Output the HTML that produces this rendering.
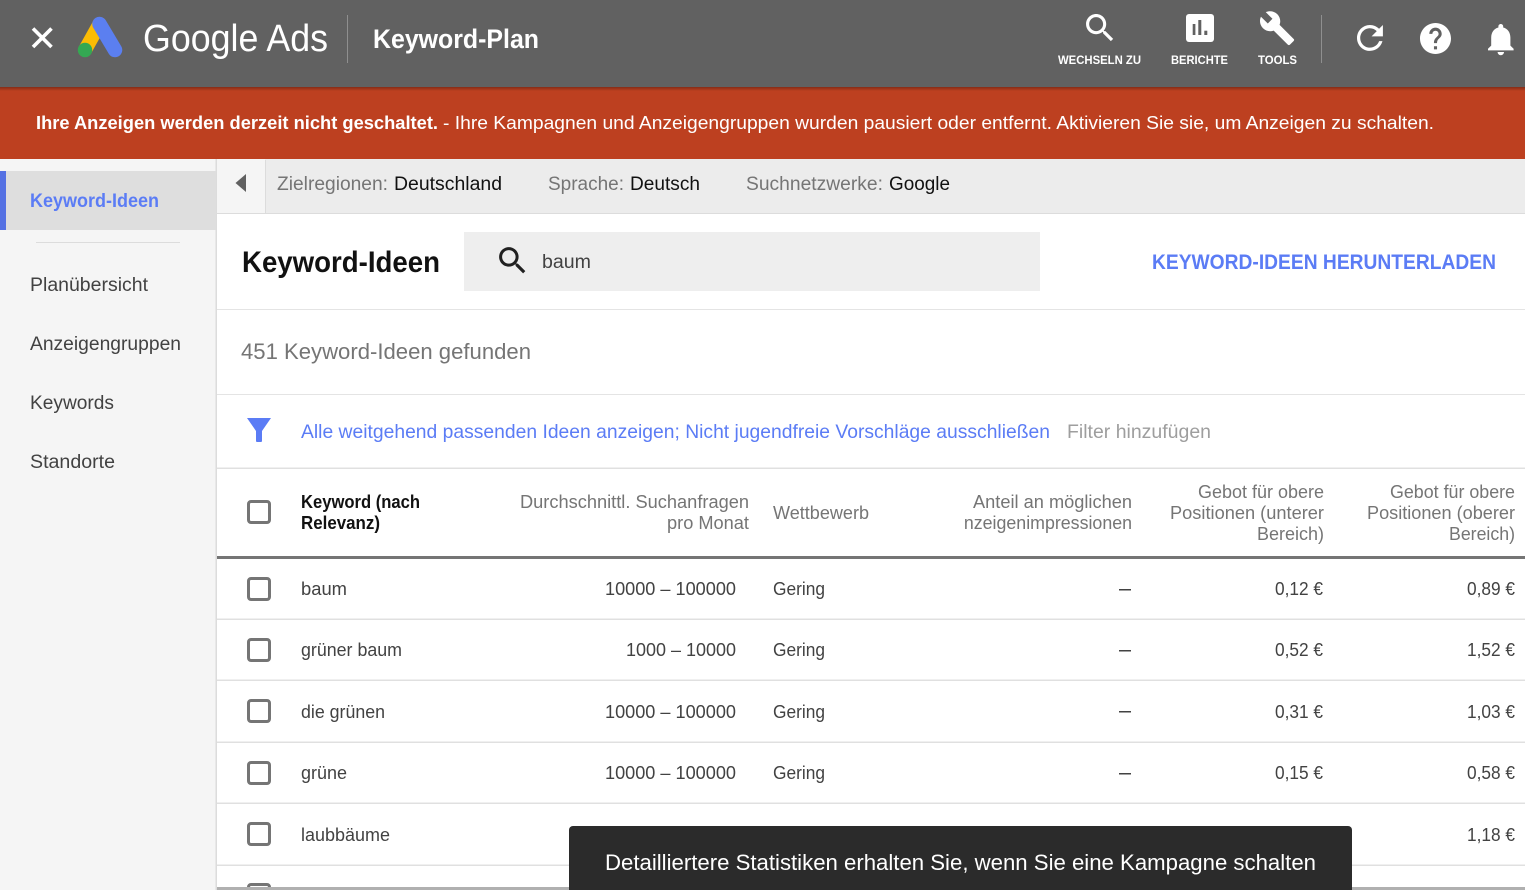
<!DOCTYPE html>
<html lang="de">
<head>
<meta charset="utf-8">
<title>Keyword-Plan</title>
<style>
html,body{margin:0;padding:0;width:1525px;height:890px;overflow:hidden;background:#fff}
svg{display:block}
text{font-family:"Liberation Sans",Arial,sans-serif;white-space:pre}
.b{font-weight:bold}
.nav{font-size:19px;fill:#424242}
.top{font-size:19px}
.hd{font-size:18px;fill:#757575}
.kw{font-size:18px;fill:#424242}
.cb{fill:none;stroke:#757575;stroke-width:3}
</style>
</head>
<body>
<svg width="1525" height="890" viewBox="0 0 1525 890" xmlns="http://www.w3.org/2000/svg">
<defs>
<linearGradient id="sh" x1="0" y1="0" x2="0" y2="1"><stop offset="0" stop-color="#000" stop-opacity=".3"/><stop offset="1" stop-color="#000" stop-opacity="0"/></linearGradient>
<clipPath id="cl"><rect x="964" y="480" width="200" height="70"/></clipPath>
</defs>
<rect width="1525" height="890" fill="#fff"/>

<!-- sidebar -->
<rect x="0" y="159" width="216" height="731" fill="#f5f5f5"/>
<rect x="215.500" y="159" width="1.500" height="731" fill="#dcdcdc"/>
<rect x="0" y="171" width="216" height="59" fill="#dedede"/>
<rect x="0" y="171" width="6" height="59" fill="#5571e3"/>
<text x="30" y="207" class="nav b" style="fill:#5b7cf5" textLength="129" lengthAdjust="spacingAndGlyphs">Keyword-Ideen</text>
<rect x="36" y="242" width="144" height="1" fill="#dcdcdc"/>
<text x="30" y="291" class="nav" textLength="118" lengthAdjust="spacingAndGlyphs">Planübersicht</text>
<text x="30" y="350" class="nav" textLength="151" lengthAdjust="spacingAndGlyphs">Anzeigengruppen</text>
<text x="30" y="409" class="nav" textLength="84" lengthAdjust="spacingAndGlyphs">Keywords</text>
<text x="30" y="468" class="nav" textLength="85" lengthAdjust="spacingAndGlyphs">Standorte</text>

<!-- header -->
<rect width="1525" height="87" fill="#616161"/>
<path d="M33 28.500L51.500 47M51.500 28.500L33 47" stroke="#fff" stroke-width="3.600" fill="none"/>
<path d="M99.500 24L85 50" stroke="#fbbc04" stroke-width="14" stroke-linecap="round" fill="none"/>
<path d="M99.500 24L115 50" stroke="#5b7ff0" stroke-width="14.500" stroke-linecap="round" fill="none"/>
<circle cx="85" cy="50" r="7.200" fill="#34a853"/>
<text x="143" y="51" font-size="38" fill="#fff" textLength="185" lengthAdjust="spacingAndGlyphs">Google Ads</text>
<rect x="347" y="15" width="1" height="48" fill="#8f8f8f"/>
<text x="373" y="48" font-size="27" class="b" fill="#fff" textLength="166" lengthAdjust="spacingAndGlyphs">Keyword-Plan</text>

<path transform="translate(1081.4 9.400) scale(1.550)" fill="#fff" d="M15.500 14h-.79l-.28-.27C15.410 12.590 16 11.110 16 9.500 16 5.910 13.090 3 9.500 3S3 5.910 3 9.500 5.910 16 9.500 16c1.610 0 3.090-.59 4.230-1.570l.27.28v.79l5 4.990L20.490 19l-4.990-5zm-6 0C7.010 14 5 11.990 5 9.500S7.010 5 9.500 5 14 7.010 14 9.500 11.990 14 9.500 14z"/>
<rect x="1186" y="14" width="28" height="28" rx="3" fill="#fff"/>
<rect x="1192.700" y="24" width="2.700" height="11" fill="#616161"/>
<rect x="1198.300" y="20" width="3" height="15" fill="#616161"/>
<rect x="1204.300" y="30.700" width="3" height="4.300" fill="#616161"/>
<path transform="translate(1258.500 9.500) scale(1.550)" fill="#fff" d="M22.700 19l-9.100-9.100c.9-2.300.4-5-1.500-6.900-2-2-5-2.400-7.400-1.300L9 6 6 9 1.600 4.700C.4 7.100.9 10.100 2.900 12.100c1.900 1.900 4.600 2.400 6.900 1.500l9.100 9.100c.4.4 1 .4 1.400 0l2.300-2.300c.5-.4.5-1.100.1-1.400z"/>
<text x="1058" y="64" font-size="12" class="b" fill="#fff" textLength="83" lengthAdjust="spacingAndGlyphs">WECHSELN ZU</text>
<text x="1171" y="64" font-size="12" class="b" fill="#fff" textLength="57" lengthAdjust="spacingAndGlyphs">BERICHTE</text>
<text x="1258" y="64" font-size="12" class="b" fill="#fff" textLength="39" lengthAdjust="spacingAndGlyphs">TOOLS</text>
<rect x="1321" y="15" width="1" height="48" fill="#8f8f8f"/>
<path transform="translate(1350.500 18.500) scale(1.620)" fill="#fff" d="M17.650 6.350C16.200 4.900 14.210 4 12 4c-4.420 0-7.990 3.580-7.990 8s3.570 8 7.990 8c3.730 0 6.840-2.550 7.730-6h-2.080c-.82 2.330-3.040 4-5.650 4-3.310 0-6-2.690-6-6s2.690-6 6-6c1.660 0 3.140.69 4.220 1.780L13 11h7V4l-2.350 2.350z"/>
<path transform="translate(1416.900 19.900) scale(1.550)" fill="#fff" d="M12 2C6.480 2 2 6.480 2 12s4.480 10 10 10 10-4.480 10-10S17.520 2 12 2zm1 17h-2v-2h2v2zm2.070-7.750l-.9.92C13.450 12.900 13 13.500 13 15h-2v-.5c0-1.100.45-2.100 1.170-2.830l1.240-1.260c.37-.36.59-.86.59-1.410 0-1.100-.9-2-2-2s-2 .9-2 2H8c0-2.210 1.790-4 4-4s4 1.790 4 4c0 .88-.36 1.680-.93 2.250z"/>
<path transform="translate(1481.600 20) scale(1.600)" fill="#fff" d="M12 22c1.100 0 2-.9 2-2h-4c0 1.100.89 2 2 2zm6-6v-5c0-3.070-1.640-5.640-4.500-6.320V4c0-.83-.67-1.500-1.500-1.500s-1.500.67-1.500 1.500v.68C7.630 5.360 6 7.920 6 11v5l-2 2v1h16v-1l-2-2z"/>

<!-- banner -->
<rect x="0" y="87" width="1525" height="72" fill="#bd4020"/>
<rect x="0" y="87" width="1525" height="4" fill="url(#sh)"/>
<text x="36" y="129" font-size="18" class="b" fill="#fff" textLength="402" lengthAdjust="spacingAndGlyphs">Ihre Anzeigen werden derzeit nicht geschaltet.</text>
<text x="443" y="129" font-size="18" fill="#fff" textLength="991" lengthAdjust="spacingAndGlyphs">- Ihre Kampagnen und Anzeigengruppen wurden pausiert oder entfernt. Aktivieren Sie sie, um Anzeigen zu schalten.</text>

<!-- location bar -->
<rect x="217" y="159" width="1308" height="54" fill="#ececec"/>
<rect x="217" y="159" width="48" height="54" fill="#f5f5f5"/>
<rect x="265" y="160" width="1" height="53" fill="#dcdcdc"/>
<rect x="217" y="213" width="1308" height="1" fill="#dcdcdc"/>
<path d="M246 174V192L235.500 183z" fill="#616161"/>
<text x="277" y="190" class="top" fill="#757575" textLength="111" lengthAdjust="spacingAndGlyphs">Zielregionen:</text>
<text x="394" y="190" class="top" fill="#111" textLength="108" lengthAdjust="spacingAndGlyphs">Deutschland</text>
<text x="548" y="190" class="top" fill="#757575" textLength="76" lengthAdjust="spacingAndGlyphs">Sprache:</text>
<text x="630" y="190" class="top" fill="#111" textLength="70" lengthAdjust="spacingAndGlyphs">Deutsch</text>
<text x="746" y="190" class="top" fill="#757575" textLength="137" lengthAdjust="spacingAndGlyphs">Suchnetzwerke:</text>
<text x="889" y="190" class="top" fill="#111" textLength="61" lengthAdjust="spacingAndGlyphs">Google</text>

<!-- title row -->
<text x="242" y="272" font-size="30" class="b" fill="#111" textLength="198" lengthAdjust="spacingAndGlyphs">Keyword-Ideen</text>
<rect x="464" y="232" width="576" height="59" fill="#eeeeee"/>
<path transform="translate(494.600 242.600) scale(1.500)" fill="#212121" d="M15.500 14h-.79l-.28-.27C15.410 12.590 16 11.110 16 9.500 16 5.910 13.090 3 9.500 3S3 5.910 3 9.500 5.910 16 9.500 16c1.610 0 3.090-.59 4.230-1.570l.27.28v.79l5 4.990L20.490 19l-4.990-5zm-6 0C7.010 14 5 11.990 5 9.500S7.010 5 9.500 5 14 7.010 14 9.500 11.990 14 9.500 14z"/>
<text x="542" y="268" font-size="19" fill="#424242" textLength="49" lengthAdjust="spacingAndGlyphs">baum</text>
<text x="1152" y="269" font-size="21" class="b" fill="#5b7cf5" textLength="344" lengthAdjust="spacingAndGlyphs">KEYWORD-IDEEN HERUNTERLADEN</text>
<rect x="217" y="309" width="1308" height="1" fill="#e4e4e4"/>

<text x="241" y="359" font-size="22" fill="#757575" textLength="290" lengthAdjust="spacingAndGlyphs">451 Keyword-Ideen gefunden</text>
<rect x="217" y="394" width="1308" height="1" fill="#e4e4e4"/>

<!-- filter -->
<path d="M247 418h24l-9 13v10a1 1 0 0 1-1 1h-4a1 1 0 0 1-1-1v-10z" fill="#5b7cf5"/>
<text x="301" y="438" font-size="19.500" fill="#5b7cf5" textLength="749" lengthAdjust="spacingAndGlyphs">Alle weitgehend passenden Ideen anzeigen; Nicht jugendfreie Vorschläge ausschließen</text>
<text x="1067" y="438" font-size="19.500" fill="#9e9e9e" textLength="144" lengthAdjust="spacingAndGlyphs">Filter hinzufügen</text>
<rect x="217" y="467.500" width="1308" height="1.500" fill="#e0e0e0"/>

<!-- table head -->
<rect class="cb" x="248.500" y="501.500" width="21" height="21" rx="2.500"/>
<text x="301" y="508" class="b" font-size="18" fill="#111" textLength="119" lengthAdjust="spacingAndGlyphs">Keyword (nach</text>
<text x="301" y="529" class="b" font-size="18" fill="#111" textLength="79" lengthAdjust="spacingAndGlyphs">Relevanz)</text>
<text x="520" y="508" class="hd" textLength="229" lengthAdjust="spacingAndGlyphs">Durchschnittl. Suchanfragen</text>
<text x="667" y="529" class="hd" textLength="82" lengthAdjust="spacingAndGlyphs">pro Monat</text>
<text x="773" y="519" class="hd" textLength="96" lengthAdjust="spacingAndGlyphs">Wettbewerb</text>
<text x="973" y="508" class="hd" textLength="159" lengthAdjust="spacingAndGlyphs">Anteil an möglichen</text>
<g clip-path="url(#cl)"><text x="952" y="529" class="hd" textLength="180" lengthAdjust="spacingAndGlyphs">Anzeigenimpressionen</text></g>
<text x="1198" y="498" class="hd" textLength="126" lengthAdjust="spacingAndGlyphs">Gebot für obere</text>
<text x="1170" y="519" class="hd" textLength="154" lengthAdjust="spacingAndGlyphs">Positionen (unterer</text>
<text x="1257" y="540" class="hd" textLength="67" lengthAdjust="spacingAndGlyphs">Bereich)</text>
<text x="1390" y="498" class="hd" textLength="125" lengthAdjust="spacingAndGlyphs">Gebot für obere</text>
<text x="1367" y="519" class="hd" textLength="148" lengthAdjust="spacingAndGlyphs">Positionen (oberer</text>
<text x="1449" y="540" class="hd" textLength="66" lengthAdjust="spacingAndGlyphs">Bereich)</text>
<rect x="217" y="556" width="1308" height="3" fill="#757575"/>

<!-- row 1 -->
<rect class="cb" x="248.500" y="578.500" width="21" height="21" rx="2.500"/>
<text x="301" y="595" class="kw" textLength="46" lengthAdjust="spacingAndGlyphs">baum</text>
<text x="605" y="595" class="kw" textLength="131" lengthAdjust="spacingAndGlyphs">10000 – 100000</text>
<text x="773" y="595" class="kw" textLength="52" lengthAdjust="spacingAndGlyphs">Gering</text>
<rect x="1119" y="589" width="12" height="1.500" fill="#424242"/>
<text x="1275" y="595" class="kw" textLength="48" lengthAdjust="spacingAndGlyphs">0,12 €</text>
<text x="1467" y="595" class="kw" textLength="48" lengthAdjust="spacingAndGlyphs">0,89 €</text>
<rect x="217" y="618.500" width="1308" height="1.500" fill="#e0e0e0"/>

<!-- row 2 -->
<rect class="cb" x="248.500" y="639.500" width="21" height="21" rx="2.500"/>
<text x="301" y="656" class="kw" textLength="101" lengthAdjust="spacingAndGlyphs">grüner baum</text>
<text x="626" y="656" class="kw" textLength="110" lengthAdjust="spacingAndGlyphs">1000 – 10000</text>
<text x="773" y="656" class="kw" textLength="52" lengthAdjust="spacingAndGlyphs">Gering</text>
<rect x="1119" y="650" width="12" height="1.500" fill="#424242"/>
<text x="1275" y="656" class="kw" textLength="48" lengthAdjust="spacingAndGlyphs">0,52 €</text>
<text x="1467" y="656" class="kw" textLength="48" lengthAdjust="spacingAndGlyphs">1,52 €</text>
<rect x="217" y="679.500" width="1308" height="1.500" fill="#e0e0e0"/>

<!-- row 3 -->
<rect class="cb" x="248.500" y="700.500" width="21" height="21" rx="2.500"/>
<text x="301" y="718" class="kw" textLength="84" lengthAdjust="spacingAndGlyphs">die grünen</text>
<text x="605" y="718" class="kw" textLength="131" lengthAdjust="spacingAndGlyphs">10000 – 100000</text>
<text x="773" y="718" class="kw" textLength="52" lengthAdjust="spacingAndGlyphs">Gering</text>
<rect x="1119" y="711" width="12" height="1.500" fill="#424242"/>
<text x="1275" y="718" class="kw" textLength="48" lengthAdjust="spacingAndGlyphs">0,31 €</text>
<text x="1467" y="718" class="kw" textLength="48" lengthAdjust="spacingAndGlyphs">1,03 €</text>
<rect x="217" y="741.500" width="1308" height="1.500" fill="#e0e0e0"/>

<!-- row 4 -->
<rect class="cb" x="248.500" y="762.500" width="21" height="21" rx="2.500"/>
<text x="301" y="779" class="kw" textLength="46" lengthAdjust="spacingAndGlyphs">grüne</text>
<text x="605" y="779" class="kw" textLength="131" lengthAdjust="spacingAndGlyphs">10000 – 100000</text>
<text x="773" y="779" class="kw" textLength="52" lengthAdjust="spacingAndGlyphs">Gering</text>
<rect x="1119" y="773" width="12" height="1.500" fill="#424242"/>
<text x="1275" y="779" class="kw" textLength="48" lengthAdjust="spacingAndGlyphs">0,15 €</text>
<text x="1467" y="779" class="kw" textLength="48" lengthAdjust="spacingAndGlyphs">0,58 €</text>
<rect x="217" y="802.500" width="1308" height="1.500" fill="#e0e0e0"/>

<!-- row 5 -->
<rect class="cb" x="248.500" y="823.500" width="21" height="21" rx="2.500"/>
<text x="301" y="841" class="kw" textLength="89" lengthAdjust="spacingAndGlyphs">laubbäume</text>
<text x="1467" y="841" class="kw" textLength="48" lengthAdjust="spacingAndGlyphs">1,18 €</text>
<rect x="217" y="864.500" width="1308" height="1.500" fill="#e0e0e0"/>

<!-- row 6 partial -->
<rect class="cb" x="248.500" y="884.500" width="21" height="21" rx="2.500"/>
<rect x="217" y="887" width="1308" height="3" fill="#b0b0b0"/>

<!-- toast -->
<path d="M569 890V830a4 4 0 0 1 4-4H1348a4 4 0 0 1 4 4V890z" fill="#2b2b2b"/>
<text x="605" y="870" font-size="22" fill="#fff" textLength="711" lengthAdjust="spacingAndGlyphs">Detailliertere Statistiken erhalten Sie, wenn Sie eine Kampagne schalten</text>
</svg>
</body>
</html>
